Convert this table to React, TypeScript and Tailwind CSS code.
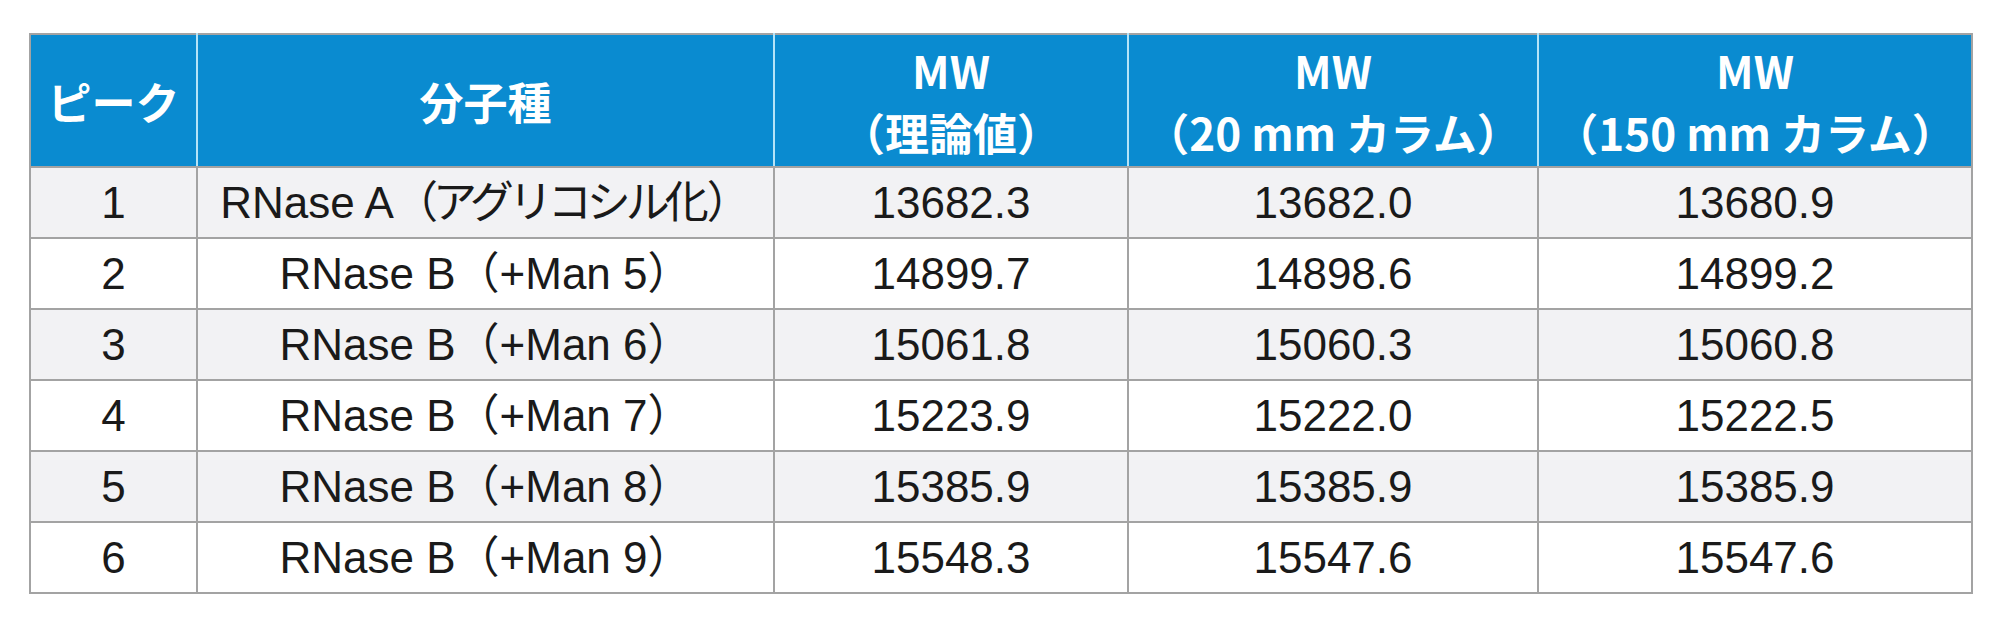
import React from "react";

type Cell = React.ReactNode;

const rows: Cell[][] = [
  [
    "1",
    <>
      RNase A<span className="tracking-[-5px]">（アグリコシル化</span>
      <span className="ml-[3px]">）</span>
    </>,
    "13682.3",
    "13682.0",
    "13680.9",
  ],
  ["2", "RNase B（+Man 5）", "14899.7", "14898.6", "14899.2"],
  ["3", "RNase B（+Man 6）", "15061.8", "15060.3", "15060.8"],
  ["4", "RNase B（+Man 7）", "15223.9", "15222.0", "15222.5"],
  ["5", "RNase B（+Man 8）", "15385.9", "15385.9", "15385.9"],
  ["6", "RNase B（+Man 9）", "15548.3", "15547.6", "15547.6"],
];

export default function App() {
  return (
    <div className="w-[2000px] h-[632px] bg-white pt-[33px] pl-[29px]">
      <table className="table-fixed border-collapse border-2 border-[#a3a3a3]">
        <colgroup>
          <col className="w-[167px]" />
          <col className="w-[577px]" />
          <col className="w-[354px]" />
          <col className="w-[410px]" />
          <col className="w-[434px]" />
        </colgroup>
        <thead>
          <tr
            className="h-[133px] bg-[#0a8bd0] text-white font-bold text-[44px] leading-[62px]"
            style={{ fontFamily: '"Noto Sans CJK JP", "Noto Sans", sans-serif' }}
          >
            <th className="border-2 border-[#a3a3a3] border-r-[#b5e3f7] font-bold">ピーク</th>
            <th className="border-2 border-[#a3a3a3] border-x-[#b5e3f7] font-bold">分子種</th>
            <th className="border-2 border-[#a3a3a3] border-x-[#b5e3f7] font-bold">
              <div>MW</div>
              <div>（理論値）</div>
            </th>
            <th className="border-2 border-[#a3a3a3] border-x-[#b5e3f7] font-bold">
              <div>MW</div>
              <div>（20 mm カラム）</div>
            </th>
            <th className="border-2 border-[#a3a3a3] border-l-[#b5e3f7] font-bold">
              <div>MW</div>
              <div>（150 mm カラム）</div>
            </th>
          </tr>
        </thead>
        <tbody
          className="text-[44px] text-[#1a1a1a]"
          style={{ fontFamily: '"Liberation Sans", "Noto Sans CJK JP", sans-serif' }}
        >
          {rows.map((r, i) => (
            <tr key={i} className={`h-[71px] ${i % 2 === 0 ? "bg-[#f2f2f4]" : "bg-white"}`}>
              {r.map((c, j) => (
                <td key={j} className="border-2 border-[#a3a3a3] text-center leading-none p-0 whitespace-nowrap">
                  {c}
                </td>
              ))}
            </tr>
          ))}
        </tbody>
      </table>
    </div>
  );
}
